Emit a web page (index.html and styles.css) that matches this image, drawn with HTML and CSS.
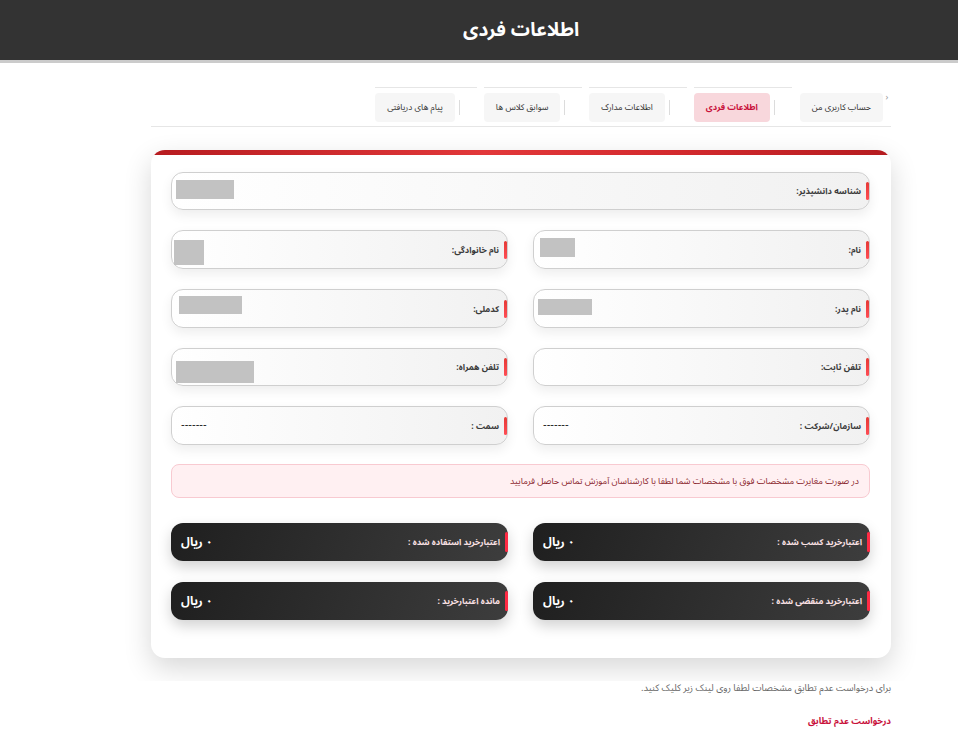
FILE: index.html
```html
<!DOCTYPE html>
<html lang="fa" dir="rtl">
<head>
  <meta charset="UTF-8" />
  <title>اطلاعات فردی</title>
  <link rel="stylesheet" href="styles.css">
</head>
<body>
  <header class="topbar">
    <h1>اطلاعات فردی</h1>
  </header>

  <main class="page">
    <nav class="tabs">
      <span class="tabs-arrow">‹</span>
      <ul class="tab-list">
        <li class="tab-item tab-item-first"><a class="tab" href="#">حساب کاربری من</a></li>
        <li class="tab-item"><span class="tab-sep"></span><a class="tab tab-active" href="#">اطلاعات فردی</a></li>
        <li class="tab-item"><span class="tab-sep"></span><a class="tab" href="#">اطلاعات مدارک</a></li>
        <li class="tab-item"><span class="tab-sep"></span><a class="tab" href="#">سوابق کلاس ها</a></li>
        <li class="tab-item"><span class="tab-sep"></span><a class="tab" href="#">پیام های دریافتی</a></li>
      </ul>
    </nav>

    <div class="card-wrap">
      <section class="card">
        <div class="field field-wide">
          <span class="field-label">شناسه دانشپذیر:</span>
          <span class="mask mask-id"></span>
        </div>

        <div class="grid">
          <div class="field">
            <span class="field-label">نام:</span>
            <span class="mask mask-name"></span>
          </div>
          <div class="field">
            <span class="field-label">نام خانوادگی:</span>
            <span class="mask mask-family"></span>
          </div>

          <div class="field">
            <span class="field-label">نام پدر:</span>
            <span class="mask mask-father"></span>
          </div>
          <div class="field">
            <span class="field-label">کدملی:</span>
            <span class="mask mask-code"></span>
          </div>

          <div class="field field-short">
            <span class="field-label">تلفن ثابت:</span>
          </div>
          <div class="field field-short">
            <span class="field-label">تلفن همراه:</span>
            <span class="mask mask-mobile"></span>
          </div>

          <div class="field">
            <span class="field-label">سازمان/شرکت :</span>
            <span class="field-value">-------</span>
          </div>
          <div class="field">
            <span class="field-label">سمت :</span>
            <span class="field-value">-------</span>
          </div>
        </div>

        <div class="notice">در صورت مغایرت مشخصات فوق با مشخصات شما لطفا با کارشناسان آموزش تماس حاصل فرمایید</div>

        <div class="grid grid-credit">
          <div class="credit">
            <span class="credit-label">اعتبارخرید کسب شده :</span>
            <span class="credit-value">۰ ریال</span>
          </div>
          <div class="credit">
            <span class="credit-label">اعتبارخرید استفاده شده :</span>
            <span class="credit-value">۰ ریال</span>
          </div>
          <div class="credit">
            <span class="credit-label">اعتبارخرید منقضی شده :</span>
            <span class="credit-value">۰ ریال</span>
          </div>
          <div class="credit">
            <span class="credit-label">مانده اعتبارخرید :</span>
            <span class="credit-value">۰ ریال</span>
          </div>
        </div>
      </section>
    </div>

    <p class="hint">برای درخواست عدم تطابق مشخصات لطفا روی لینک زیر کلیک کنید.</p>
    <a class="mismatch-link" href="#">درخواست عدم تطابق</a>
  </main>
</body>
</html>
```

FILE: styles.css
```css
body {
  margin: 0;
  font-family: "Noto Sans Arabic", "Noto Naskh Arabic", Vazirmatn, "DejaVu Sans", sans-serif;
  font-size: 10px;
  color: #333;
  background: #fff;
}

.topbar {
  height: 60px;
  background: #333;
  border-bottom: 3px solid #cbcbcb;
  padding: 0 67px 0 151px;
  display: flex;
  align-items: center;
  justify-content: center;
}
.topbar h1 {
  margin: 0;
  color: #fff;
  font-size: 19px;
  font-weight: bold;
}

.page {
  padding: 0 67px 0 151px;
}

/* tabs */
.tabs {
  margin-top: 24px;
  display: flex;
  align-items: flex-start;
  border-bottom: 1px solid #e6e6e6;
  padding-bottom: 4px;
}
.tabs-arrow {
  width: 8px;
  font-size: 9px;
  color: #999;
  line-height: 1;
  margin-top: 6px;
  text-align: center;
}
.tab-list {
  list-style: none;
  margin: 0;
  padding: 0;
  display: flex;
  gap: 7px;
}
.tab-item {
  display: flex;
  align-items: center;
  gap: 4px;
  padding-top: 5px;
  padding-right: 17px;
  border-top: 1px solid #e6e6e6;
}
.tab-item-first {
  padding-right: 0;
  border-top-color: transparent;
  margin-left: 1px;
}
.tab-sep {
  width: 1px;
  height: 15px;
  background: #dcdcdc;
}
.tab {
  display: block;
  height: 29px;
  line-height: 29px;
  padding: 0 12px;
  border-radius: 4px;
  background: #f6f6f6;
  color: #333;
  font-size: 8.5px;
  text-decoration: none;
}
.tab-active {
  background: #f8d7dc;
  color: #c8103a;
  font-weight: bold;
}

/* card */
.card-wrap {
  overflow: hidden;
  margin: 0 -60px;
  padding: 23px 60px 23px;
}
.card {
  position: relative;
  background: #fff;
  border-radius: 14px;
  overflow: hidden;
  padding: 22px 21px 38px 20px;
  box-shadow: 0 10px 28px rgba(0, 0, 0, 0.16);
}
.card::before {
  content: "";
  position: absolute;
  top: 0;
  left: 0;
  right: 0;
  height: 5px;
  background: linear-gradient(90deg, #b71c20, #e2383a 45%, #d42a2e 70%, #b51c20);
}

.grid {
  display: grid;
  grid-template-columns: 1fr 1fr;
  column-gap: 25px;
  row-gap: 20px;
}

.field {
  display: flex;
  align-items: flex-start;
  height: 39px;
  box-sizing: border-box;
  border: 1px solid #cfcfcf;
  border-radius: 12px;
  background: linear-gradient(to right, #fff, #f1f1f1);
  box-shadow: 0 5px 12px rgba(0, 0, 0, 0.07);
}
.field-wide {
  height: 38px;
  margin-bottom: 20px;
}
.field-short {
  height: 38px;
}
.field-label {
  align-self: center;
  display: flex;
  align-items: center;
  gap: 5px;
  font-size: 8.5px;
  font-weight: bold;
  color: #3a3a3a;
}
.field-label::before {
  content: "";
  width: 3px;
  height: 18px;
  border-radius: 2px;
  background: linear-gradient(#e53935, #ff4d55);
}
.field-value {
  align-self: center;
  margin-right: auto;
  margin-left: 9px;
  margin-top: -4px;
  font-family: "Liberation Sans", sans-serif;
  font-size: 11px;
  color: #111;
}

.mask {
  margin-right: auto;
  background: #c2c2c2;
}
.mask-id { width: 58px; height: 19px; margin-top: 7px; margin-left: 4px; }
.mask-name { width: 35px; height: 19px; margin-top: 7px; margin-left: 6px; }
.mask-family { width: 30px; height: 25px; margin-top: 9px; margin-left: 2px; }
.mask-father { width: 54px; height: 16px; margin-top: 9px; margin-left: 4px; }
.mask-code { width: 63px; height: 18px; margin-top: 6px; margin-left: 7px; }
.mask-mobile { width: 78px; height: 22px; margin-top: 12px; margin-left: 4px; }

.notice {
  margin: 19px 0 25px;
  height: 34px;
  box-sizing: border-box;
  padding: 0 10px;
  display: flex;
  align-items: center;
  background: #fff0f2;
  border: 1px solid #f8cad1;
  border-radius: 8px;
  color: #8a1f2c;
  font-size: 8.8px;
}

.grid-credit {
  row-gap: 21px;
}
.credit {
  display: flex;
  align-items: center;
  height: 38px;
  border-radius: 12px;
  background: linear-gradient(110deg, #1f1f1f, #3d3d3d);
  box-shadow: 0 6px 14px rgba(0, 0, 0, 0.18);
}
.credit-label {
  display: flex;
  align-items: center;
  gap: 5px;
  font-size: 8.5px;
  font-weight: bold;
  color: #fbe1e5;
}
.credit-label::before {
  content: "";
  width: 3px;
  height: 20px;
  border-radius: 2px;
  background: #ff2a44;
}
.credit-value {
  margin-right: auto;
  margin-left: 10px;
  font-size: 12px;
  font-weight: bold;
  color: #fff;
}

.hint {
  margin: 0;
  line-height: 14px;
  color: #666;
  font-size: 9.4px;
}
.mismatch-link {
  display: block;
  margin-top: 17px;
  color: #c8103a;
  font-size: 9px;
  font-weight: bold;
  text-decoration: none;
}
```
